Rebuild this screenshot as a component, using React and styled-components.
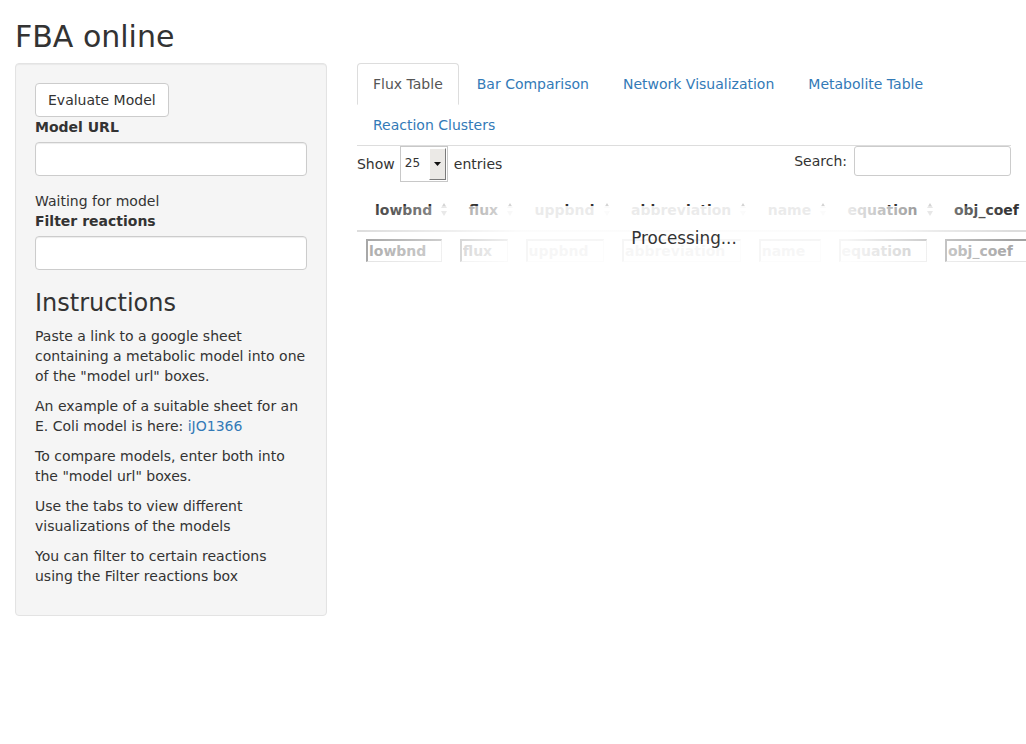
import React from "react";
import styled, { createGlobalStyle } from "styled-components";

const GlobalStyle = createGlobalStyle`
  * { box-sizing: border-box; }
  html, body {
    margin: 0;
    overflow-x: hidden;
  }
  body {
    font-family: "DejaVu Sans", "Liberation Sans", sans-serif;
    font-size: 14px;
    line-height: 1.42857143;
    color: #333;
    background: #fff;
  }
`

const Page = styled.div`
    padding: 0 15px;
`

const Title = styled.h2`
    margin: 20px 0 10px;
    font-size: 30px;
    font-weight: 500;
    line-height: 1.1;
    color: #333;
`

const Row = styled.div`
    display: flex;
    margin: 0 -15px;
`

const Sidebar = styled.div`
    flex: 0 0 33.3333%;
    padding: 0 15px;
`

const Main = styled.div`
    flex: 0 0 66.6667%;
    min-width: 0;
    padding: 0 15px;
`

const Well = styled.div`
    padding: 19px;
    margin-bottom: 20px;
    background: #f5f5f5;
    border: 1px solid #e3e3e3;
    border-radius: 4px;
    box-shadow: inset 0 1px 1px rgba(0, 0, 0, 0.05);
`

const Button = styled.button`
    display: block;
    padding: 6px 12px;
    font-family: inherit;
    font-size: 14px;
    line-height: 20px;
    color: #333;
    background: #fff;
    border: 1px solid #ccc;
    border-radius: 4px;
    cursor: pointer;
`

const FormGroup = styled.div`
    margin-bottom: 15px;
`

const Label = styled.label`
    display: block;
    margin-bottom: 5px;
    font-weight: bold;
`

const TextInput = styled.input`
    display: block;
    width: 100%;
    height: 34px;
    padding: 6px 12px;
    font-family: inherit;
    font-size: 14px;
    color: #555;
    background: #fff;
    border: 1px solid #ccc;
    border-radius: 4px;
    box-shadow: inset 0 1px 1px rgba(0, 0, 0, 0.075);
`

const Status = styled.div``

const Heading = styled.h3`
    margin: 20px 0 10px;
    font-size: 24px;
    font-weight: 500;
    line-height: 1.1;
`

const Para = styled.p`
    margin: 0 0 10px;
`

const Link = styled.a`
    color: #337ab7;
    text-decoration: none;
`

const TabList = styled.ul`
    display: flex;
    flex-wrap: wrap;
    margin: 0;
    padding: 0;
    list-style: none;
    border-bottom: 1px solid #ddd;
`

const TabItem = styled.li`
    margin: 0 2px -1px 0;
`

const TabLink = styled.a`
    display: block;
    padding: 10px 15px;
    line-height: 20px;
    text-decoration: none;
    border: 1px solid transparent;
    border-radius: 4px 4px 0 0;
    color: ${({ $active }) => ($active ? "#555" : "#337ab7")};
    background: ${({ $active }) => ($active ? "#fff" : "transparent")};
    border-color: ${({ $active }) => ($active ? "#ddd #ddd transparent" : "transparent")};
    cursor: pointer;
`

const TableWrapper = styled.div`
    position: relative;
`

const Controls = styled.div`
    display: flex;
    justify-content: space-between;
    align-items: flex-start;
`

const LengthControl = styled.label`
    display: flex;
    align-items: center;
    height: 36px;
`

const FakeSelect = styled.span`
    display: inline-flex;
    align-items: center;
    width: 48px;
    height: 36px;
    margin: 0 6px 0 5px;
    background: #fff;
    border: 1px solid #c8c8c8;
`

const SelectValue = styled.span`
    flex: 1;
    padding-left: 4px;
    font-size: 12px;
    color: #333;
`

const SelectButton = styled.span`
    display: flex;
    align-items: center;
    justify-content: center;
    width: 17px;
    height: 32px;
    margin-right: 1px;
    background: #ebe9e6;
    border-left: 1px solid #fff;
    border-top: 1px solid #fff;
    border-right: 1px solid #7a7a7a;
    border-bottom: 1px solid #7a7a7a;
`

const FilterControl = styled.label`
    display: flex;
    align-items: center;
    gap: 7px;
`

const SearchInput = styled.input`
    width: 157px;
    height: 30px;
    padding: 4px 6px;
    font-family: inherit;
    font-size: 14px;
    background: #fff;
    border: 1px solid #ccc;
    border-radius: 3px;
`

const Table = styled.table`
    margin-top: 8px;
    border-collapse: separate;
    border-spacing: 0;
    white-space: nowrap;
`

const HeadCell = styled.th`
    padding: 10px 3.4px 10px 18px;
    text-align: left;
    font-weight: bold;
    color: #333;
    border-bottom: 2px solid #ddd;
`

const SortIcon = styled.svg`
    display: inline-block;
    margin-left: 9px;
    vertical-align: -1px;
`

const FilterCell = styled.th`
    padding: 7px 9px 8px;
    font-weight: bold;
`

const FilterInput = styled.input`
    display: block;
    width: 100%;
    min-width: 0;
    height: 23px;
    padding: 0 1px;
    font-family: inherit;
    font-size: 14px;
    font-weight: bold;
    color: #333;
    background: #fff;
    border-style: solid;
    border-width: 2px 1px 1px 2px;
    border-color: #a3a3a3 #e2e2e2 #e2e2e2 #a3a3a3;

    &::placeholder {
        color: #a8a8a8;
    }
`

const Processing = styled.div`
    position: absolute;
    top: 60px;
    left: 0;
    width: 100%;
    height: 60px;
    padding-top: 20px;
    text-align: center;
    font-size: 16.8px;
    line-height: 24px;
    color: #333;
    background: linear-gradient(
        to right,
        rgba(255, 255, 255, 0) 0%,
        rgba(255, 255, 255, 0.9) 25%,
        rgba(255, 255, 255, 0.9) 75%,
        rgba(255, 255, 255, 0) 100%
    );
`

const tabs = [
    "Flux Table",
    "Bar Comparison",
    "Network Visualization",
    "Metabolite Table",
    "Reaction Clusters",
]

const columns = ["lowbnd", "flux", "uppbnd", "abbreviation", "name", "equation", "obj_coef"]

const Sort = () => (
    <SortIcon width="6" height="13" viewBox="0 0 6 13">
        <polygon points="3,0 6,5 0,5" fill="#d4d4d4" />
        <polygon points="0,8 6,8 3,13" fill="#d4d4d4" />
    </SortIcon>
)

const App = () => {
    return (
        <Page>
            <GlobalStyle />
            <Title>FBA online</Title>
            <Row>
                <Sidebar>
                    <Well>
                        <Button>Evaluate Model</Button>
                        <FormGroup>
                            <Label>Model URL</Label>
                            <TextInput type="text" />
                        </FormGroup>
                        <Status>Waiting for model</Status>
                        <FormGroup>
                            <Label>Filter reactions</Label>
                            <TextInput type="text" />
                        </FormGroup>
                        <Heading>Instructions</Heading>
                        <Para>Paste a link to a google sheet containing a metabolic model into one of the "model url" boxes.</Para>
                        <Para>An example of a suitable sheet for an E. Coli model is here: <Link href="#">iJO1366</Link></Para>
                        <Para>To compare models, enter both into the "model url" boxes.</Para>
                        <Para>Use the tabs to view different visualizations of the models</Para>
                        <Para>You can filter to certain reactions using the Filter reactions box</Para>
                    </Well>
                </Sidebar>
                <Main>
                    <TabList>
                        {tabs.map((t, i) => (
                            <TabItem key={t}>
                                <TabLink $active={i === 0}>{t}</TabLink>
                            </TabItem>
                        ))}
                    </TabList>
                    <TableWrapper>
                        <Controls>
                            <LengthControl>
                                Show
                                <FakeSelect>
                                    <SelectValue>25</SelectValue>
                                    <SelectButton>
                                        <svg width="7" height="4" viewBox="0 0 7 4">
                                            <polygon points="0,0 7,0 3.5,4" fill="#111" />
                                        </svg>
                                    </SelectButton>
                                </FakeSelect>
                                entries
                            </LengthControl>
                            <FilterControl>
                                Search:
                                <SearchInput type="search" />
                            </FilterControl>
                        </Controls>
                        <Processing>Processing...</Processing>
                        <Table>
                            <thead>
                                <tr>
                                    {columns.map((c) => (
                                        <HeadCell key={c}>
                                            {c}
                                            <Sort />
                                        </HeadCell>
                                    ))}
                                </tr>
                                <tr>
                                    {columns.map((c) => (
                                        <FilterCell key={c}>
                                            <FilterInput type="text" size={1} placeholder={c} />
                                        </FilterCell>
                                    ))}
                                </tr>
                            </thead>
                        </Table>
                    </TableWrapper>
                </Main>
            </Row>
        </Page>
    )
}

export default App
